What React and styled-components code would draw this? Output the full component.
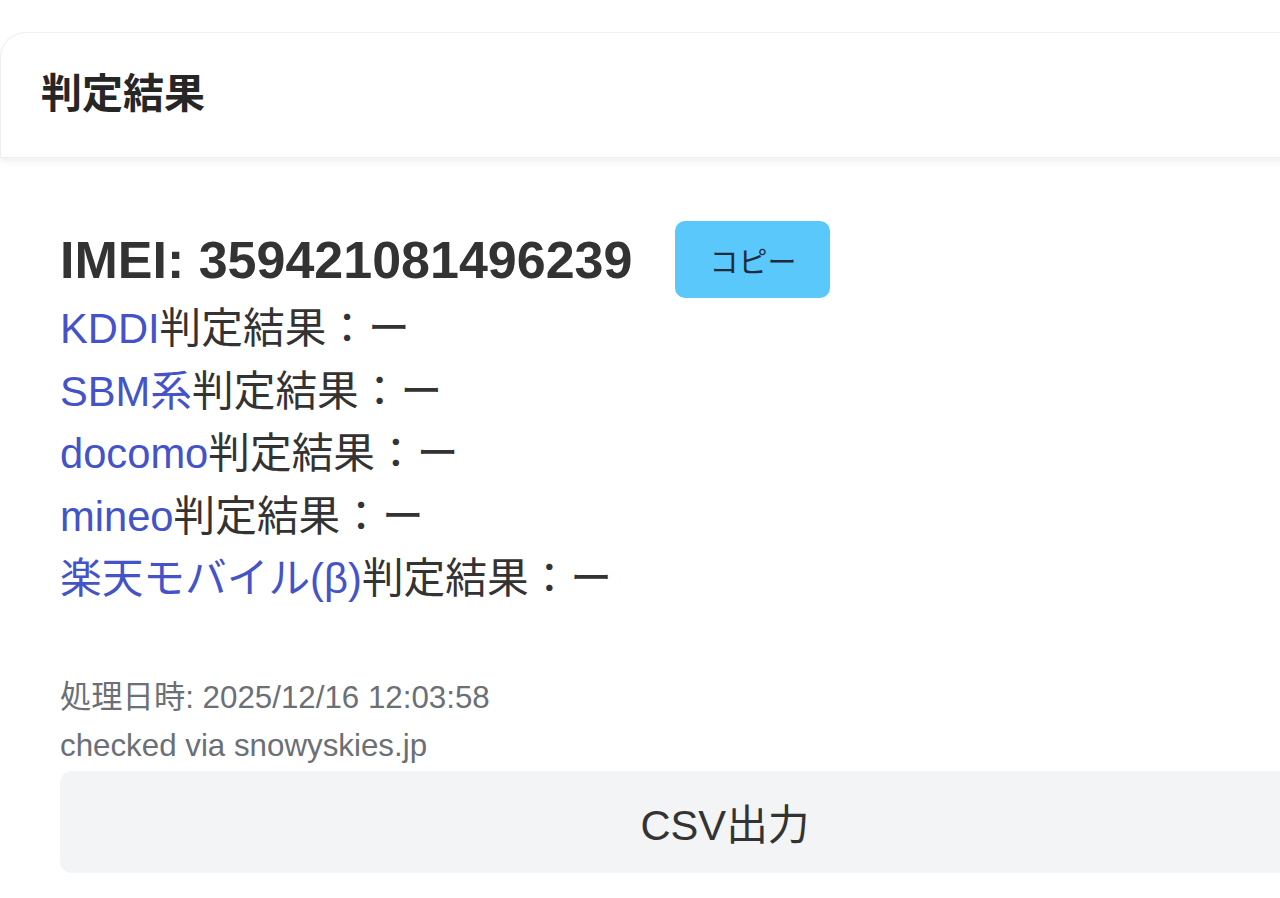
import React from "react";
import styled, { createGlobalStyle } from "styled-components";

const GlobalStyle = createGlobalStyle`
  html, body {
    margin: 0;
    padding: 0;
    background: #ffffff;
    overflow: hidden;
  }
  body {
    font-family: "Liberation Sans", Arial, "Noto Sans CJK JP", sans-serif;
    color: #333333;
  }
`;

const Page = styled.div`
  padding-top: 32px;
  width: 1280px;
  height: 898px;
  overflow: hidden;
`;

const Card = styled.div`
  width: 1450px;
  background: #ffffff;
`;

const CardHeader = styled.div`
  height: 126px;
  display: flex;
  align-items: center;
  padding: 0 0 10px 40px;
  box-sizing: border-box;
  background: #ffffff;
  border: 1px solid #efefef;
  border-right: none;
  border-top-left-radius: 26px;
  box-shadow: 0 4px 6px rgba(0, 0, 0, 0.06);
`;

const Title = styled.h2`
  margin: 0;
  font-size: 41px;
  font-weight: 700;
  color: #262626;
  font-family: "Noto Sans CJK JP", sans-serif;
`;

const CardBody = styled.div`
  padding: 63px 60px 0 60px;
`;

const ImeiRow = styled.div`
  display: flex;
  align-items: center;
  gap: 43px;
`;

const Imei = styled.div`
  font-size: 52px;
  font-weight: 700;
  color: #333;
`;

const CopyButton = styled.button`
  height: 77px;
  padding: 0 34px;
  border: none;
  border-radius: 10px;
  background: #5ac8fa;
  color: #1f2a3a;
  font-size: 29px;
  font-family: "Noto Sans CJK JP", sans-serif;
  cursor: pointer;
`;

const ResultList = styled.div`
  display: flex;
  flex-direction: column;
`;

const ResultLine = styled.div`
  font-size: 41.7px;
  line-height: 62.5px;
  color: #333;
`;

const Carrier = styled.span`
  color: #4453c8;
`;

const Meta = styled.div`
  margin-top: 63px;
  display: flex;
  flex-direction: column;
  color: #6b6f76;
  font-size: 31.3px;
  line-height: 48px;
`;

const CsvButton = styled.button`
  display: block;
  width: 100%;
  height: 102px;
  margin-top: 1px;
  border: none;
  border-radius: 12px;
  background: #f3f4f6;
  color: #333;
  font-size: 41.7px;
  font-family: "Liberation Sans", Arial, "Noto Sans CJK JP", sans-serif;
  cursor: pointer;
`;

const carriers = ["KDDI", "SBM系", "docomo", "mineo", "楽天モバイル(β)"];

export default function App() {
  return (
    <>
      <GlobalStyle />
      <Page>
        <Card>
          <CardHeader>
            <Title>判定結果</Title>
          </CardHeader>
          <CardBody>
            <ImeiRow>
              <Imei>IMEI: 359421081496239</Imei>
              <CopyButton>コピー</CopyButton>
            </ImeiRow>
            <ResultList>
              {carriers.map((c) => (
                <ResultLine key={c}>
                  <Carrier>{c}</Carrier>判定結果：ー
                </ResultLine>
              ))}
            </ResultList>
            <Meta>
              <span>処理日時: 2025/12/16 12:03:58</span>
              <span>checked via snowyskies.jp</span>
            </Meta>
            <CsvButton>CSV出力</CsvButton>
          </CardBody>
        </Card>
      </Page>
    </>
  );
}
